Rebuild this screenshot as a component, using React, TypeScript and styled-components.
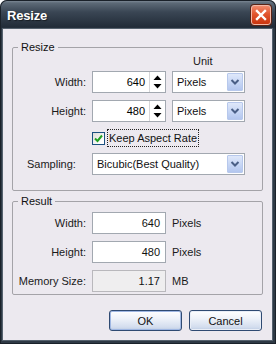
import React from "react";
import styled, { createGlobalStyle } from "styled-components";

const GlobalStyle = createGlobalStyle`
  html, body {
    margin: 0;
    padding: 0;
    background: #ffffff;
  }
  body {
    font-family: "Liberation Sans", Arial, sans-serif;
    font-size: 11px;
    color: #000;
  }
`;

const Window = styled.div`
  width: 276px;
  height: 344px;
  box-sizing: border-box;
  display: flex;
  flex-direction: column;
  padding: 0 4px 4px 3px;
  border-radius: 7px 7px 0 0;
  background: linear-gradient(
    to bottom,
    #8a96a2 0px,
    #5d6a77 3px,
    #3a4654 12px,
    #222c38 27px,
    #2e3945 29px,
    #2e3945 100%
  );
  box-shadow: inset 0 0 0 1px #1a2129;
`;

const TitleBar = styled.div`
  height: 29px;
  flex: none;
  display: flex;
  align-items: center;
  justify-content: space-between;
  padding: 0 1px 0 4px;
`;

const Title = styled.span`
  color: #ffffff;
  font-weight: bold;
  font-size: 13px;
  letter-spacing: -0.2px;
  text-shadow: 1px 1px 1px rgba(0, 0, 0, 0.5);
  margin-top: 2px;
`;

const CloseButton = styled.button`
  width: 20px;
  height: 20px;
  padding: 0;
  display: flex;
  align-items: center;
  justify-content: center;
  border: 1px solid #f3b8a6;
  border-radius: 3px;
  background: linear-gradient(to bottom, #f08a6c 0%, #e2552e 45%, #c9350f 100%);
  box-shadow: 0 0 0 1px #5a2416;
  margin-top: 1px;
`;

const Client = styled.div`
  flex: 1;
  display: flex;
  flex-direction: column;
  background: #ece9ef;
  padding: 12px 9px 0 9px;
  box-shadow: 0 0 0 1px #55616d;
`;

const Group = styled.fieldset<{ $bottom: number }>`
  margin: 0;
  padding: 0 0 ${(p) => p.$bottom}px 0;
  min-inline-size: 0;
  border: 1px solid #a4a3a8;
  border-radius: 2px;
  & + & {
    margin-top: 4px;
  }
`;

const Legend = styled.legend`
  margin-left: 5px;
  padding: 0 3px;
  line-height: 12px;
  color: #111;
`;

const Row = styled.div<{ $top: number; $height?: number }>`
  display: grid;
  grid-template-columns: 73px 74px 73px;
  column-gap: 6px;
  align-items: center;
  margin-top: ${(p) => p.$top}px;
  height: ${(p) => p.$height ?? 22}px;
`;

const Label = styled.span<{ $left?: boolean }>`
  text-align: ${(p) => (p.$left ? "left" : "right")};
  padding-left: ${(p) => (p.$left ? "14px" : "0")};
  color: #1a1a1a;
`;

const UnitHead = styled.span`
  grid-column: 3;
  padding-left: 21px;
  color: #1a1a1a;
`;

const Box = styled.div<{ $disabled?: boolean }>`
  height: 22px;
  box-sizing: border-box;
  display: flex;
  align-items: center;
  justify-content: flex-end;
  padding-right: 5px;
  border: 1px solid ${(p) => (p.$disabled ? "#b9b8bc" : "#a2a8b0")};
  background: ${(p) => (p.$disabled ? "#efeeef" : "#ffffff")};
  color: #111;
`;

const SpinBox = styled.div`
  height: 22px;
  box-sizing: border-box;
  display: flex;
  border: 1px solid #a2a8b0;
  background: #ffffff;
`;

const SpinValue = styled.span`
  flex: 1;
  display: flex;
  align-items: center;
  justify-content: flex-end;
  padding-right: 4px;
  border-right: 1px solid #d6d6d9;
`;

const SpinArrows = styled.div`
  width: 15px;
  display: flex;
  flex-direction: column;
  align-items: center;
  justify-content: space-between;
  padding: 3px 0 3px;
  box-sizing: border-box;
`;

const Select = styled.div<{ $span?: boolean }>`
  grid-column: ${(p) => (p.$span ? "2 / span 2" : "auto")};
  height: 22px;
  box-sizing: border-box;
  display: flex;
  align-items: center;
  justify-content: space-between;
  padding: 1px 1px 1px 4px;
  border: 1px solid #a2a8b0;
  background: #ffffff;
  color: #111;
`;

const DropButton = styled.span`
  width: 16px;
  height: 18px;
  box-sizing: border-box;
  display: flex;
  align-items: center;
  justify-content: center;
  border: 1px solid #b7c8ec;
  border-radius: 1px;
  background: linear-gradient(to bottom, #dfe8fa 0%, #c4d4f4 60%, #b3c6ee 100%);
`;

const CheckWrap = styled.label`
  grid-column: 2 / span 2;
  display: flex;
  align-items: center;
  gap: 2px;
`;

const CheckBox = styled.span`
  width: 13px;
  height: 13px;
  box-sizing: border-box;
  display: flex;
  align-items: center;
  justify-content: center;
  border: 1px solid #1c5180;
  background: linear-gradient(135deg, #dcdcd7 0%, #ffffff 80%);
`;

const FocusText = styled.span`
  padding: 2px 1px;
  border: 1px dotted #222;
  color: #111;
`;

const UnitText = styled.span`
  color: #1a1a1a;
`;

const Buttons = styled.div`
  display: flex;
  justify-content: flex-end;
  gap: 7px;
  margin-top: 15px;
  padding-right: 1px;
`;

const Button = styled.button<{ $default?: boolean }>`
  width: 73px;
  height: 21px;
  padding: 0;
  font-family: inherit;
  font-size: 11px;
  color: #111;
  border: 1px solid #2f4a72;
  border-radius: 3px;
  background: linear-gradient(to bottom, #ffffff 0%, #eef2f9 40%, #d3ddee 85%, #bccbe3 100%);
  box-shadow: ${(p) =>
    p.$default ? "inset 0 0 0 1px #9fb7e3" : "inset 0 0 0 1px #e9eef7"};
`;

function Chevron() {
  return (
    <svg width="10" height="8" viewBox="0 0 10 8">
      <path d="M1.5 2 L5 5.5 L8.5 2" fill="none" stroke="#4a5f86" strokeWidth="2" />
    </svg>
  );
}

function Spinner({ value }: { value: string }) {
  return (
    <SpinBox>
      <SpinValue>{value}</SpinValue>
      <SpinArrows>
        <svg width="9" height="6" viewBox="0 0 9 6">
          <path d="M4.5 0.5 L8.5 5 L0.5 5 Z" fill="#000" />
        </svg>
        <svg width="9" height="6" viewBox="0 0 9 6">
          <path d="M0.5 1 L8.5 1 L4.5 5.5 Z" fill="#000" />
        </svg>
      </SpinArrows>
    </SpinBox>
  );
}

function Dropdown({ value, span }: { value: string; span?: boolean }) {
  return (
    <Select $span={span}>
      <span>{value}</span>
      <DropButton>
        <Chevron />
      </DropButton>
    </Select>
  );
}

export default function App() {
  return (
    <>
      <GlobalStyle />
      <Window>
        <TitleBar>
          <Title>Resize</Title>
          <CloseButton aria-label="Close">
            <svg width="12" height="12" viewBox="0 0 12 12">
              <path d="M2 2 L10 10 M10 2 L2 10" stroke="#ffffff" strokeWidth="2.4" strokeLinecap="square" />
            </svg>
          </CloseButton>
        </TitleBar>
        <Client>
          <Group $bottom={15}>
            <Legend>Resize</Legend>
            <Row $top={1} $height={14}>
              <UnitHead>Unit</UnitHead>
            </Row>
            <Row $top={3}>
              <Label>Width:</Label>
              <Spinner value="640" />
              <Dropdown value="Pixels" />
            </Row>
            <Row $top={7}>
              <Label>Height:</Label>
              <Spinner value="480" />
              <Dropdown value="Pixels" />
            </Row>
            <Row $top={6} $height={20}>
              <span />
              <CheckWrap>
                <CheckBox>
                  <svg width="9" height="9" viewBox="0 0 9 9">
                    <path d="M1 4.5 L3.5 7 L8 1.5" fill="none" stroke="#22a122" strokeWidth="2" />
                  </svg>
                </CheckBox>
                <FocusText>Keep Aspect Rate</FocusText>
              </CheckWrap>
            </Row>
            <Row $top={5}>
              <Label $left>Sampling:</Label>
              <Dropdown value="Bicubic(Best Quality)" span />
            </Row>
          </Group>
          <Group $bottom={2}>
            <Legend>Result</Legend>
            <Row $top={5}>
              <Label>Width:</Label>
              <Box>640</Box>
              <UnitText>Pixels</UnitText>
            </Row>
            <Row $top={7}>
              <Label>Height:</Label>
              <Box>480</Box>
              <UnitText>Pixels</UnitText>
            </Row>
            <Row $top={7}>
              <Label>Memory Size:</Label>
              <Box $disabled>1.17</Box>
              <UnitText>MB</UnitText>
            </Row>
          </Group>
          <Buttons>
            <Button $default>OK</Button>
            <Button>Cancel</Button>
          </Buttons>
        </Client>
      </Window>
    </>
  );
}
